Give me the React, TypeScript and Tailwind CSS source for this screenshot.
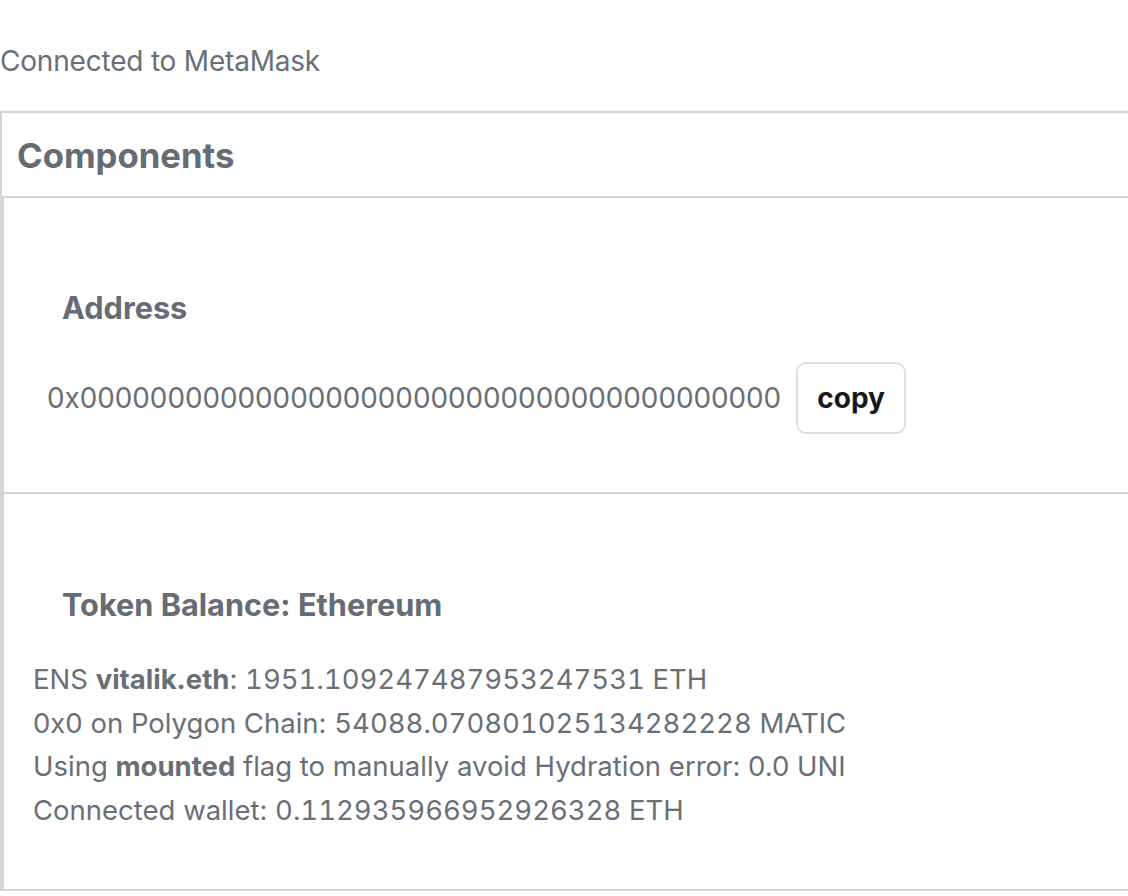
import React from 'react';

const rows: React.ReactNode[] = [
  <>ENS <b className="font-bold">vitalik.eth</b>: <span className="tabular-nums">1951.109247487953247531</span> ETH</>,
  <>0x0 on Polygon Chain: <span className="tabular-nums">54088.070801025134282228</span> MATIC</>,
  <>Using <b className="font-bold">mounted</b> flag to manually avoid Hydration error: 0.0 UNI</>,
  <>Connected wallet: <span className="tabular-nums">0.112935966952926328</span> ETH</>,
];

export default function App() {
  return (
    <div className="min-h-screen overflow-hidden bg-white text-[#687076] font-['Inter','Liberation_Sans',sans-serif]">
      <p className="mt-[40px] h-[42px] text-[28px] leading-[42px] tracking-[-0.2px]">Connected to MetaMask</p>

      <div className="mt-[29px] border-l-2 border-t-2 border-[#d4d4d4]">
        <h2 className="px-[15px] pt-[18px] pb-[17px] text-[34.7px] font-bold leading-[48px] text-[#656c73]">Components</h2>

        <div className="border-l-2 border-t-2 border-b-2 border-[#d4d4d4]">
          <section className="pt-[90px] pb-[58px]">
            <h3 className="pl-[58px] text-[30.7px] font-bold leading-[40px] text-[#656c73]">Address</h3>
            <div className="mt-[34px] flex items-center gap-[15px] pl-[43px]">
              <span className="text-[27.8px] leading-[42px]">0x0000000000000000000000000000000000000000</span>
              <button type="button" className="h-[72px] w-[110px] rounded-[10px] border-2 border-[#dfe0e3] bg-white text-[28px] font-bold text-[#16181b]">
                copy
              </button>
            </div>
          </section>

          <section className="border-t-2 border-[#d4d4d4] pt-[91px] pb-[57px]">
            <h3 className="pl-[58px] text-[30.7px] font-bold leading-[40px] text-[#656c73]">Token Balance: Ethereum</h3>
            <ul className="mt-[33px] pl-[29px]">
              {rows.map((r, i) => (
                <li key={i} className="text-[27.5px] leading-[43.5px]">{r}</li>
              ))}
            </ul>
          </section>
        </div>
      </div>
    </div>
  );
}
